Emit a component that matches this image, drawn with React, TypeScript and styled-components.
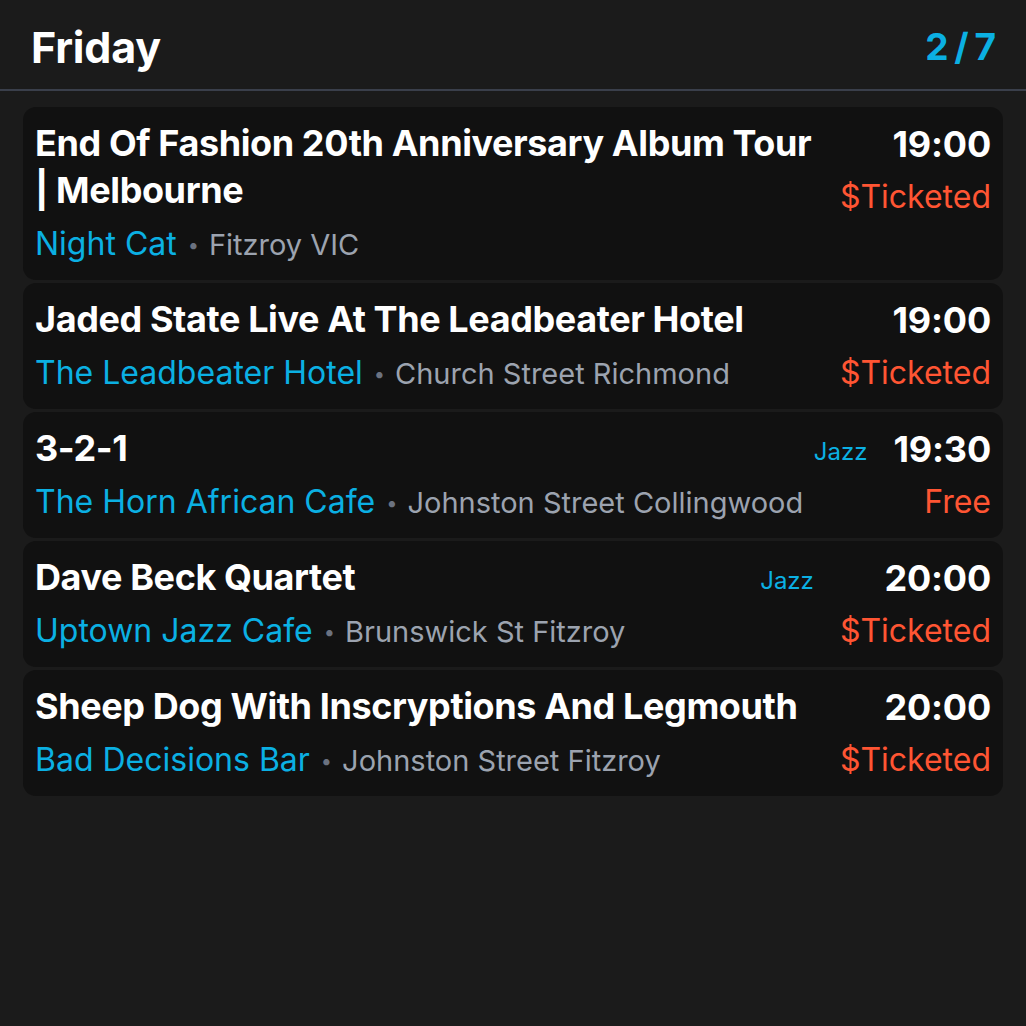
import React from "react";
import styled, { createGlobalStyle } from "styled-components";

const GlobalStyle = createGlobalStyle`
  html, body {
    margin: 0;
    padding: 0;
    background: #1b1b1b;
  }
  body {
    font-family: Inter, "Noto Sans", "Liberation Sans", sans-serif;
    color: #ffffff;
    -webkit-font-smoothing: antialiased;
  }
`;

const Page = styled.div`
  width: 1026px;
  min-height: 1026px;
  background: #1b1b1b;
  display: flex;
  flex-direction: column;
`;

const Header = styled.header`
  display: flex;
  align-items: center;
  justify-content: space-between;
  height: 91px;
  padding: 4px 30px 0 31px;
  box-sizing: border-box;
  border-bottom: 2px solid #3a3f4b;
`;

const DayTitle = styled.h1`
  margin: 0;
  font-size: 43px;
  font-weight: 700;
  letter-spacing: -0.2px;
  color: #ffffff;
`;

const Counter = styled.div`
  font-size: 37px;
  font-weight: 700;
  color: #0bb0e3;
  word-spacing: -3px;
`;

const List = styled.div`
  display: flex;
  flex-direction: column;
  gap: 3px;
  padding: 16px 23px;
`;

const Card = styled.div`
  display: flex;
  align-items: flex-start;
  gap: 26px;
  background: #111111;
  border-radius: 13px;
  padding: 13px 12px 12px 12px;
`;

const Main = styled.div`
  flex: 1;
  min-width: 0;
`;

const Title = styled.div`
  font-size: 36px;
  line-height: 47px;
  font-weight: 700;
  color: #ffffff;
  letter-spacing: -0.4px;
`;

const VenueLine = styled.div`
  margin-top: 6px;
  line-height: 48px;
  height: 48px;
  font-size: 32px;
  white-space: nowrap;
`;

const Venue = styled.span`
  color: #0bb0e3;
`;

const Dot = styled.span`
  color: #6b7280;
  font-size: 20px;
  line-height: 1;
  margin: 0 10px 0 11px;
  vertical-align: 3px;
`;

const Location = styled.span`
  color: #9ca3af;
  font-size: 29px;
  line-height: 1;
`;

const Tag = styled.div`
  font-size: 24px;
  line-height: 46px;
  color: #0bb0e3;
  margin-top: 4px;
`;

const Side = styled.div`
  display: flex;
  flex-direction: column;
  align-items: flex-end;
  text-align: right;
`;

const Time = styled.div`
  font-size: 36px;
  line-height: 48px;
  font-weight: 700;
  color: #ffffff;
  letter-spacing: -0.2px;
`;

const Price = styled.div`
  font-size: 32px;
  line-height: 48px;
  color: #ff5533;
  margin-top: 5px;
`;

type EventItem = {
  title: string;
  venue: string;
  location: string;
  time: string;
  price: string;
  tag?: string;
};

const events: EventItem[] = [
  {
    title: "End Of Fashion 20th Anniversary Album Tour | Melbourne",
    venue: "Night Cat",
    location: "Fitzroy VIC",
    time: "19:00",
    price: "$Ticketed",
  },
  {
    title: "Jaded State Live At The Leadbeater Hotel",
    venue: "The Leadbeater Hotel",
    location: "Church Street Richmond",
    time: "19:00",
    price: "$Ticketed",
  },
  {
    title: "3-2-1",
    venue: "The Horn African Cafe",
    location: "Johnston Street Collingwood",
    time: "19:30",
    price: "Free",
    tag: "Jazz",
  },
  {
    title: "Dave Beck Quartet",
    venue: "Uptown Jazz Cafe",
    location: "Brunswick St Fitzroy",
    time: "20:00",
    price: "$Ticketed",
    tag: "Jazz",
  },
  {
    title: "Sheep Dog With Inscryptions And Legmouth",
    venue: "Bad Decisions Bar",
    location: "Johnston Street Fitzroy",
    time: "20:00",
    price: "$Ticketed",
  },
];

export default function App() {
  return (
    <Page>
      <GlobalStyle />
      <Header>
        <DayTitle>Friday</DayTitle>
        <Counter>2 / 7</Counter>
      </Header>
      <List>
        {events.map((e, i) => (
          <Card key={i}>
            <Main>
              <Title>{e.title}</Title>
              <VenueLine>
                <Venue>{e.venue}</Venue>
                <Dot>•</Dot>
                <Location>{e.location}</Location>
              </VenueLine>
            </Main>
            {e.tag && <Tag>{e.tag}</Tag>}
            <Side>
              <Time>{e.time}</Time>
              <Price>{e.price}</Price>
            </Side>
          </Card>
        ))}
      </List>
    </Page>
  );
}
